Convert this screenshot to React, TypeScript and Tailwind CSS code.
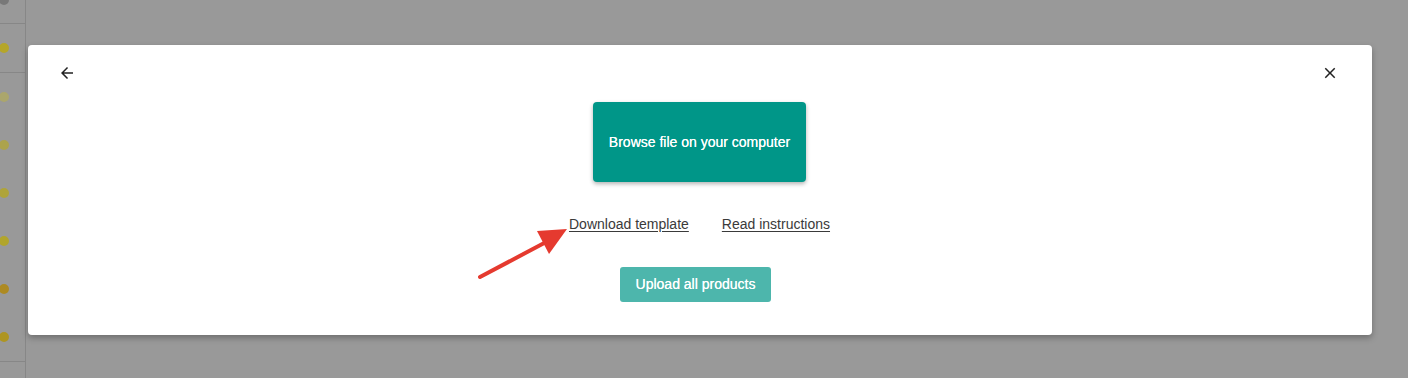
import React from "react";

function ArrowBack() {
  return (
    <svg width="18" height="18" viewBox="0 0 24 24" fill="#222">
      <path d="M20 11H7.83l5.59-5.59L12 4l-8 8 8 8 1.41-1.41L7.83 13H20v-2z" />
    </svg>
  );
}

function CloseIcon() {
  return (
    <svg width="18" height="18" viewBox="0 0 24 24" fill="#222">
      <path d="M19 6.41L17.59 5 12 10.59 6.41 5 5 6.41 10.59 12 5 17.59 6.41 19 12 13.41 17.59 19 19 17.59 13.41 12z" />
    </svg>
  );
}

export default function App() {
  return (
    <div
      className="relative flex h-[378px] w-[1408px] overflow-hidden bg-[#999999]"
      style={{ fontFamily: '"Liberation Sans", Arial, sans-serif' }}
    >
      {/* sidebar remnant */}
      <div className="flex w-[26px] shrink-0 flex-col border-r border-[#878787]">
        <div className="relative h-[24px] border-b border-[#878787]">
          <div className="absolute left-[-1px] top-[-5px] h-[10px] w-[10px] rounded-full bg-[#787878]" />
        </div>
        <div className="flex h-[49px] items-center border-b border-[#878787]">
          <div className="ml-[-1px] h-[10px] w-[10px] rounded-full bg-[#b5a62a]" />
        </div>
        <div className="flex flex-col gap-[38px] pt-[19px]">
          <div className="ml-[-1px] h-[10px] w-[10px] rounded-full bg-[#aba66c]" />
          <div className="ml-[-1px] h-[10px] w-[10px] rounded-full bg-[#aca34c]" />
          <div className="ml-[-1px] h-[10px] w-[10px] rounded-full bg-[#afa43a]" />
          <div className="ml-[-1px] h-[10px] w-[10px] rounded-full bg-[#b1a52c]" />
          <div className="ml-[-1px] h-[10px] w-[10px] rounded-full bg-[#ad8a22]" />
          <div className="ml-[-1px] h-[10px] w-[10px] rounded-full bg-[#ae9522]" />
        </div>
        <div className="mt-[19px] border-b border-[#878787]" />
      </div>

      {/* modal */}
      <div className="ml-[2px] mt-[45px] flex h-[290px] w-[1344px] flex-col rounded-[4px] bg-white shadow-[0_3px_6px_rgba(0,0,0,0.28)]">
        <div className="flex items-center justify-between pl-[30px] pr-[33px] pt-[19px]">
          <ArrowBack />
          <CloseIcon />
        </div>
        <div className="flex flex-col items-center">
          <button className="ml-[-1px] mt-[20px] flex h-[80px] w-[213px] items-center justify-center rounded-[4px] bg-[#009688] text-[14px] font-normal text-white shadow-[0_2px_4px_rgba(0,0,0,0.3)] [text-shadow:0_0_0.4px_#fff]">
            Browse file on your computer
          </button>
          <div className="ml-[-1px] mt-[34px] flex items-center gap-[33px] text-[14px] leading-[16px] text-[#3a3a3a]">
            <span className="underline underline-offset-[2px]">Download template</span>
            <span className="underline underline-offset-[2px]">Read instructions</span>
          </div>
          <button className="ml-[-9px] mt-[35px] flex h-[35px] w-[151px] items-center justify-center rounded-[3px] bg-[#4db6ac] text-[14px] font-normal text-white [text-shadow:0_0_0.4px_#fff]">
            Upload all products
          </button>
        </div>
      </div>

      {/* annotation arrow */}
      <svg
        className="pointer-events-none absolute left-0 top-0"
        width="1408"
        height="378"
        viewBox="0 0 1408 378"
      >
        <line x1="480" y1="277" x2="548" y2="241" stroke="#e53a2f" strokeWidth="4" strokeLinecap="round" />
        <polygon points="567,229 537,231 549,254" fill="#e53a2f" />
      </svg>
    </div>
  );
}
